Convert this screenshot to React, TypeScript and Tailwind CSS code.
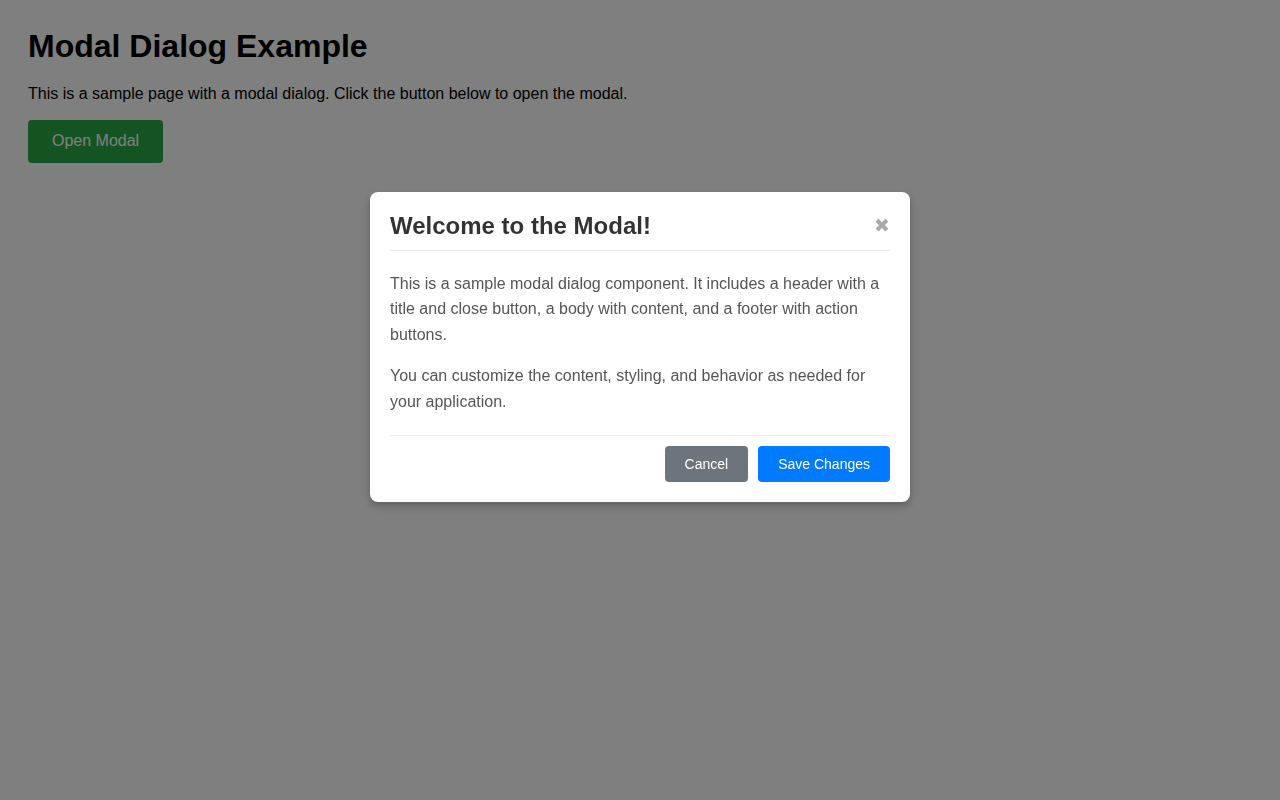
export default function App() {
  return (
    <div className="min-h-screen bg-white font-['Liberation_Sans',Arial,sans-serif]">
      {/* Page */}
      <div className="px-[28px] pt-[28px]">
        <h1 className="text-[32px] leading-[1.15] font-bold text-black mb-[20px]">Modal Dialog Example</h1>
        <p className="text-base leading-[1.15] text-black mb-[17px]">
          This is a sample page with a modal dialog. Click the button below to open the modal.
        </p>
        <button className="bg-[#28a745] text-white text-base leading-[1.15] px-6 py-3 rounded">Open Modal</button>
      </div>

      {/* Overlay */}
      <div className="fixed inset-0 bg-black/50 flex justify-center items-start pt-[192px]">
        <div className="w-[540px] bg-white rounded-lg p-5 shadow-[0_4px_8px_rgba(0,0,0,0.25)]">
          {/* Header */}
          <div className="flex items-center justify-between pb-[10px] border-b border-[#eee]">
            <h2 className="text-2xl leading-[1.15] font-bold text-[#333]">Welcome to the Modal!</h2>
            <button className="text-[#aaa] text-[19px] leading-none font-['DejaVu_Sans',sans-serif]">✖</button>
          </div>

          {/* Body */}
          <div className="pt-5 pb-5 text-base leading-[1.6] text-[#555]">
            <p className="mb-4">
              This is a sample modal dialog component. It includes a header with a title and close button, a body with
              content, and a footer with action buttons.
            </p>
            <p>You can customize the content, styling, and behavior as needed for your application.</p>
          </div>

          {/* Footer */}
          <div className="flex justify-end gap-[10px] pt-[10px] border-t border-[#eee]">
            <button className="bg-[#6c757d] text-white text-sm leading-[16px] px-5 py-[10px] rounded">Cancel</button>
            <button className="bg-[#007bff] text-white text-sm leading-[16px] px-5 py-[10px] rounded">Save Changes</button>
          </div>
        </div>
      </div>
    </div>
  );
}
